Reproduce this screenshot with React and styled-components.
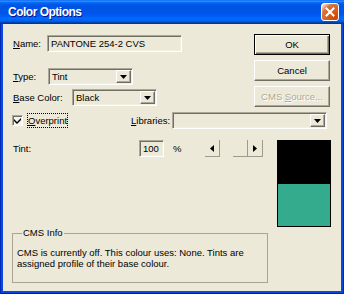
import React from "react";
import styled, { createGlobalStyle } from "styled-components";

const GlobalStyle = createGlobalStyle`
  html, body {
    margin: 0;
    padding: 0;
    background: #ece9d8;
  }
  body {
    font-family: "Liberation Sans", Arial, sans-serif;
    font-size: 9.5px;
    color: #000;
  }
`;

const Window = styled.div`
  width: 344px;
  height: 294px;
  box-sizing: border-box;
  display: flex;
  flex-direction: column;
  background: #0a46e0;
  box-shadow: inset 1px 0 #0029b6, inset -1px 0 #0029b6, inset 0 -1px #00208f;
`;

const TitleBar = styled.div`
  height: 24px;
  flex: none;
  display: flex;
  align-items: center;
  justify-content: space-between;
  padding: 0 5px 0 8px;
  background: linear-gradient(
    180deg,
    #0058ee 0%,
    #3593ff 4%,
    #288eff 6%,
    #127dff 8%,
    #036ffc 10%,
    #0262ee 14%,
    #0057e5 20%,
    #0054e3 24%,
    #0055eb 56%,
    #005bf5 66%,
    #026afe 76%,
    #0062ef 86%,
    #0052d6 92%,
    #0040ab 94%,
    #003092 100%
  );
`;

const Title = styled.span`
  color: #fff;
  font: bold 12px "Liberation Sans", Arial, sans-serif;
  letter-spacing: -0.5px;
  text-shadow: 1px 1px #0f1089;
`;

const CloseButton = styled.div`
  width: 18px;
  height: 18px;
  box-sizing: border-box;
  border: 1px solid #fff;
  border-radius: 3px;
  display: flex;
  align-items: center;
  justify-content: center;
  background: radial-gradient(circle at 90% 90%, #cc4600 0%, #dc6527 55%, #cd7546 70%, #ffccb2 90%, #fff 100%);
`;

const Body = styled.div`
  flex: 1;
  margin: 0 3px 3px;
  background: #ece9d8;
  padding: 10px 10px 0 9px;
  display: flex;
  flex-direction: column;
`;

const TopSection = styled.div`
  display: flex;
  justify-content: space-between;
  align-items: flex-start;
`;

const FieldColumn = styled.div`
  display: flex;
  flex-direction: column;
  padding-top: 1px;
`;

const FieldRow = styled.div`
  display: flex;
  align-items: center;
  height: 17px;
  margin-top: ${(p) => p.$top || 0}px;
`;

const Label = styled.span`
  width: ${(p) => p.$w}px;
  flex: none;
  padding-left: 1px;
  box-sizing: border-box;
  white-space: nowrap;
`;

const Key = styled.u`
  text-decoration: underline;
`;

const Sunken = styled.div`
  width: ${(p) => p.$w}px;
  height: 17px;
  box-sizing: border-box;
  display: flex;
  align-items: center;
  border: 1px solid;
  border-color: #aca899 #fff #fff #aca899;
  box-shadow: inset 1px 1px #716f64, inset -1px -1px #f1efe2;
  padding: 0 2px 0 3px;
  white-space: nowrap;
  overflow: hidden;
`;

const SelectValue = styled.span`
  flex: 1;
`;

const DropButton = styled.div`
  width: 15px;
  height: 13px;
  flex: none;
  box-sizing: border-box;
  margin-right: -1px;
  display: flex;
  align-items: center;
  justify-content: center;
  border: 1px solid;
  border-color: #fff #716f64 #716f64 #fff;
  box-shadow: inset -1px -1px #aca899;
  background: #ece9d8;
`;

const ButtonColumn = styled.div`
  display: flex;
  flex-direction: column;
  gap: 5px;
  margin-right: 1px;
`;

const Button = styled.div`
  width: 76px;
  height: 21px;
  box-sizing: border-box;
  display: flex;
  align-items: center;
  justify-content: center;
  border: 1px solid;
  border-color: ${(p) => (p.$default ? "#000" : "#fff #716f64 #716f64 #fff")};
  box-shadow: ${(p) =>
    p.$default
      ? "inset 1px 1px #fff, inset -1px -1px #716f64, inset -2px -2px #aca899"
      : "inset -1px -1px #aca899"};
  color: ${(p) => (p.$disabled ? "#aca899" : "#000")};
  text-shadow: ${(p) => (p.$disabled ? "1px 1px #fff" : "none")};
`;

const OptionRow = styled.div`
  display: flex;
  align-items: center;
  height: 17px;
  margin-top: 5px;
`;

const CheckGroup = styled.div`
  width: 118px;
  flex: none;
  display: flex;
  align-items: center;
  gap: 4px;
`;

const CheckBox = styled.div`
  width: 11px;
  height: 11px;
  box-sizing: border-box;
  border: 1px solid;
  border-color: #aca899 #fff #fff #aca899;
  box-shadow: inset 1px 1px #716f64;
  background: #f4f3ee;
  display: flex;
  align-items: center;
  justify-content: center;
`;

const FocusLabel = styled.span`
  border: 1px dotted #000;
  padding: 1px 0;
  line-height: 11px;
`;

const BottomSection = styled.div`
  display: flex;
  justify-content: space-between;
  align-items: flex-start;
  margin-top: 11px;
`;

const LeftPart = styled.div`
  width: 256px;
  display: flex;
  flex-direction: column;
`;

const TintRow = styled.div`
  display: flex;
  align-items: center;
  height: 17px;
`;

const Percent = styled.span`
  width: 41px;
  padding-left: 9px;
  box-sizing: border-box;
`;

const Scrollbar = styled.div`
  width: 58px;
  height: 17px;
  display: flex;
`;

const ScrollBtn = styled.div`
  width: 15px;
  height: 17px;
  box-sizing: border-box;
  display: flex;
  align-items: center;
  justify-content: center;
  border-right: 1px solid #9d9b8e;
  border-bottom: 1px solid #9d9b8e;
  background: #ece9d8;
`;

const Track = styled.div`
  flex: 1;
  background: #ece9d8;
`;

const Swatch = styled.div`
  width: 54px;
  height: 87px;
  box-sizing: border-box;
  padding: 0 1px 1px;
  background: #000;
  display: flex;
  flex-direction: column;
  justify-content: flex-end;
`;

const SwatchNew = styled.div`
  height: 42px;
  background: #34ab8c;
`;

const GroupBox = styled.fieldset`
  margin: 71px 0 0;
  padding: 9px 4px 13px;
  border: 1px solid #a8a596;
  box-sizing: border-box;
  line-height: 11px;
`;

const Legend = styled.legend`
  margin-left: 5px;
  padding: 0 1px;
  line-height: 10px;
`;

const ArrowDown = () => (
  <svg width="7" height="4" viewBox="0 0 7 4">
    <path d="M0 0h7L3.5 4z" fill="#000" />
  </svg>
);

const ArrowSide = ({ dir }) => (
  <svg width="4" height="7" viewBox="0 0 4 7">
    <path d={dir === "left" ? "M4 0v7L0 3.5z" : "M0 0v7l4-3.5z"} fill="#000" />
  </svg>
);

const Select = ({ width, value }) => (
  <Sunken $w={width}>
    <SelectValue>{value}</SelectValue>
    <DropButton>
      <ArrowDown />
    </DropButton>
  </Sunken>
);

export default function App() {
  return (
    <>
      <GlobalStyle />
      <Window>
        <TitleBar>
          <Title>Color Options</Title>
          <CloseButton>
            <svg width="10" height="10" viewBox="0 0 10 10">
              <path d="M1.5 1.5l7 7M8.5 1.5l-7 7" stroke="#fff" strokeWidth="2" strokeLinecap="square" />
            </svg>
          </CloseButton>
        </TitleBar>
        <Body>
          <TopSection>
            <FieldColumn>
              <FieldRow>
                <Label $w={35}>
                  <Key>N</Key>ame:
                </Label>
                <Sunken $w={135}>PANTONE 254-2 CVS</Sunken>
              </FieldRow>
              <FieldRow $top={16}>
                <Label $w={36}>
                  <Key>T</Key>ype:
                </Label>
                <Select width={85} value="Tint" />
              </FieldRow>
              <FieldRow $top={4}>
                <Label $w={60}>
                  <Key>B</Key>ase Color:
                </Label>
                <Select width={85} value="Black" />
              </FieldRow>
            </FieldColumn>
            <ButtonColumn>
              <Button $default>OK</Button>
              <Button>Cancel</Button>
              <Button $disabled>
                CMS&nbsp;<Key>S</Key>ource...
              </Button>
            </ButtonColumn>
          </TopSection>

          <OptionRow>
            <CheckGroup>
              <CheckBox>
                <svg width="7" height="7" viewBox="0 0 7 7">
                  <path d="M0 2l3 3 4-4v2l-4 4-3-3z" fill="#000" />
                </svg>
              </CheckBox>
              <FocusLabel>
                <Key>O</Key>verprint
              </FocusLabel>
            </CheckGroup>
            <Label $w={42}>
              <Key>L</Key>ibraries:
            </Label>
            <Select width={155} value="" />
          </OptionRow>

          <BottomSection>
            <LeftPart>
              <TintRow>
                <Label $w={127}>Tint:</Label>
                <Sunken $w={25}>100</Sunken>
                <Percent>%</Percent>
                <Scrollbar>
                  <ScrollBtn>
                    <ArrowSide dir="left" />
                  </ScrollBtn>
                  <Track />
                  <ScrollBtn />
                  <ScrollBtn>
                    <ArrowSide dir="right" />
                  </ScrollBtn>
                </Scrollbar>
              </TintRow>
              <GroupBox>
                <Legend>CMS Info</Legend>
                CMS is currently off. This colour uses: None. Tints are
                <br />
                assigned profile of their base colour.
              </GroupBox>
            </LeftPart>
            <Swatch>
              <SwatchNew />
            </Swatch>
          </BottomSection>
        </Body>
      </Window>
    </>
  );
}
